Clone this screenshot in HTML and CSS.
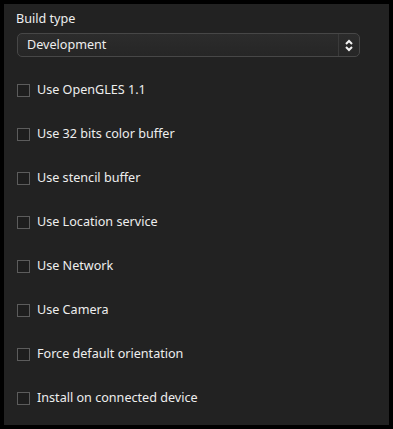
FILE: index.html
```html
<!DOCTYPE html>
<html lang="en">
<head>
  <meta charset="UTF-8" />
  <title>Build Settings</title>
  <link rel="stylesheet" href="styles.css">
</head>
<body>
  <div class="panel">
    <label class="field-label">Build type</label>
    <div class="select">
      <span class="select-value">Development</span>
      <span class="select-arrow">
        <svg width="8" height="13" viewBox="0 0 8 13">
          <path d="M1 5 L4 2 L7 5" fill="none" stroke="#f2f2f2" stroke-width="2"/>
          <path d="M1 8 L4 11 L7 8" fill="none" stroke="#f2f2f2" stroke-width="2"/>
        </svg>
      </span>
    </div>

    <div class="options">
      <div class="option"><span class="box"></span>Use OpenGLES 1.1</div>
      <div class="option"><span class="box"></span>Use 32 bits color buffer</div>
      <div class="option"><span class="box"></span>Use stencil buffer</div>
      <div class="option"><span class="box"></span>Use Location service</div>
      <div class="option"><span class="box"></span>Use Network</div>
      <div class="option"><span class="box"></span>Use Camera</div>
      <div class="option"><span class="box"></span>Force default orientation</div>
      <div class="option"><span class="box"></span>Install on connected device</div>
    </div>
  </div>
</body>
</html>
```

FILE: styles.css
```css
* {
  margin: 0;
  padding: 0;
  box-sizing: border-box;
  font-family: 'Noto Sans', 'Open Sans', sans-serif;
}

body {
  width: 393px;
  height: 429px;
  background: #000;
  padding: 4px;
}

.panel {
  width: 385px;
  height: 421px;
  background: #222;
  color: #eee;
  font-size: 12.6px;
  padding: 6px 29px 0 13px;
}

.field-label {
  display: block;
  line-height: 18px;
  margin-left: -1px;
}

.select {
  display: flex;
  align-items: center;
  height: 24px;
  margin-top: 5px;
  border: 1px solid #474747;
  border-radius: 5px;
  background: linear-gradient(#2c2c2c, #262626);
}

.select-value {
  flex: 1;
  padding-left: 9px;
  line-height: 22px;
}

.select-arrow {
  display: flex;
  align-items: center;
  justify-content: center;
  width: 21px;
  height: 100%;
  border-left: 1px solid #3a3a3a;
}

.options {
  display: flex;
  flex-direction: column;
  margin-top: 11px;
}

.option {
  display: flex;
  align-items: center;
  height: 44px;
  line-height: 18px;
}

.box {
  width: 13px;
  height: 13px;
  border: 1px solid #5c5c5c;
  background: #1e1e1e;
  margin-right: 7px;
}
```
